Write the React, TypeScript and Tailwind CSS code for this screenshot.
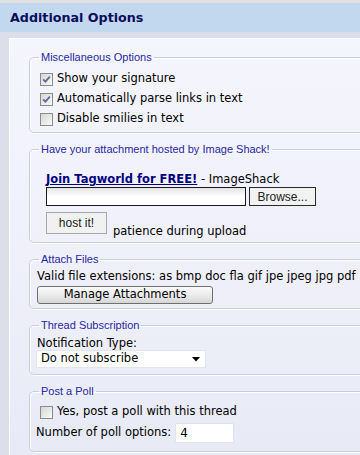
function Check({ checked }: { checked?: boolean }) {
  return (
    <span className="w-[13px] h-[13px] shrink-0 border border-[#8b8b8b] bg-gradient-to-br from-[#d6d6d2] to-[#fafaf8] flex items-center justify-center">
      {checked && (
        <svg width="9" height="9" viewBox="0 0 9 9">
          <path d="M1.2 4.4 L3.4 6.7 L7.8 1.6" fill="none" stroke="#5a6b9c" strokeWidth="1.8" />
        </svg>
      )}
    </span>
  )
}

function Box({ title, className, children }: { title: string; className?: string; children: React.ReactNode }) {
  return (
    <fieldset
      className={`ml-[19px] mr-[-30px] px-[7px] border border-[#c6cddd] rounded-[5px] shadow-[inset_1px_1px_0_#ffffff,1px_1px_0_#ffffff] ${className ?? ''}`}
    >
      <legend className="ml-[2px] px-[2px] text-[11px] leading-[13px] text-[#2626a4] font-['Liberation_Sans',Arial,sans-serif]">
        {title}
      </legend>
      {children}
    </fieldset>
  )
}

const tahoma = "font-['Liberation_Sans',Arial,sans-serif]"

export default function App() {
  return (
    <div className="w-[360px] h-[455px] overflow-hidden bg-[#dcdfea] font-['DejaVu_Sans',Verdana,sans-serif] text-[11.5px] text-black">
      <div className="h-[32px] border-t-[3px] border-[#e2e2e2] bg-[#c1d8ee] flex items-center pl-[10px]">
        <span className="text-[12.7px] font-bold text-[#0c0c5c]">Additional Options</span>
      </div>

      <div className="mt-[6px] ml-[9px] h-[500px] border-t border-l border-white bg-gradient-to-b from-[#f5f5fe] via-[#eeeff9] to-[#e4e8f4] pt-[12px] flex flex-col gap-[10px]">
        <Box title="Miscellaneous Options" className="pt-[5px] pb-[3px]">
          <label className="flex items-center h-[20px] pl-[3px] gap-[4px]">
            <Check checked />
            <span>Show your signature</span>
          </label>
          <label className="flex items-center h-[20px] pl-[3px] gap-[4px]">
            <Check checked />
            <span>Automatically parse links in text</span>
          </label>
          <label className="flex items-center h-[20px] pl-[3px] gap-[4px]">
            <Check />
            <span>Disable smilies in text</span>
          </label>
        </Box>

        <Box title="Have your attachment hosted by Image Shack!" className="pt-[16px] pb-[4px]">
          <div className="pl-[9px]">
            <div className="leading-[14px] whitespace-nowrap">
              <a className="font-bold text-[#000080] underline">Join Tagworld for FREE!</a> - ImageShack
            </div>
            <div className="mt-[1px] flex gap-[3px]">
              <div className="w-[200px] h-[19px] border border-[#1a1a1a] bg-gradient-to-b from-[#e4e4e4] via-white to-white" />
              <div className={`w-[67px] h-[19px] border border-[#2a2a2a] bg-[#f2f2f2] flex items-center justify-center text-[12px] text-[#222] ${tahoma}`}>
                Browse...
              </div>
            </div>
            <div className="mt-[6px] flex items-start gap-[6px]">
              <div className={`w-[61px] h-[22px] border border-[#a8a8a8] bg-[#f1f1f1] flex items-center justify-center text-[12px] text-[#222] ${tahoma}`}>
                host it!
              </div>
              <span className="mt-[12px] leading-[14px]">patience during upload</span>
            </div>
          </div>
        </Box>

        <Box title="Attach Files" className="pt-[3px] pb-[4px]">
          <div className="leading-[14px] whitespace-nowrap">Valid file extensions: as bmp doc fla gif jpe jpeg jpg pdf</div>
          <div className="mt-[3px] w-[176px] h-[18px] rounded-[3px] border border-[#707070] bg-gradient-to-b from-[#fafafa] via-[#ececec] to-[#d6d6d6] flex items-center justify-center">
            Manage Attachments
          </div>
        </Box>

        <Box title="Thread Subscription" className="pt-[4px] pb-[6px]">
          <div className="leading-[14px]">Notification Type:</div>
          <div className="-ml-[1px] w-[170px] h-[18px] bg-white border border-[#e4e4ec] flex items-center justify-between pl-[4px] pr-[5px]">
            <span>Do not subscribe</span>
            <svg width="8" height="5" viewBox="0 0 8 5">
              <path d="M0 0 H8 L4 4.5 Z" fill="#000" />
            </svg>
          </div>
        </Box>

        <Box title="Post a Poll" className="pt-[4px] pb-[8px]">
          <label className="flex items-center h-[20px] pl-[3px] gap-[4px]">
            <Check />
            <span>Yes, post a poll with this thread</span>
          </label>
          <div className="mt-[1px] flex items-center h-[20px] -ml-[1px] gap-[4px]">
            <span>Number of poll options:</span>
            <div className="w-[59px] h-[20px] bg-white border border-[#e2e2ea] pl-[4px] flex items-center text-[12px]">4</div>
          </div>
        </Box>
      </div>
    </div>
  )
}
